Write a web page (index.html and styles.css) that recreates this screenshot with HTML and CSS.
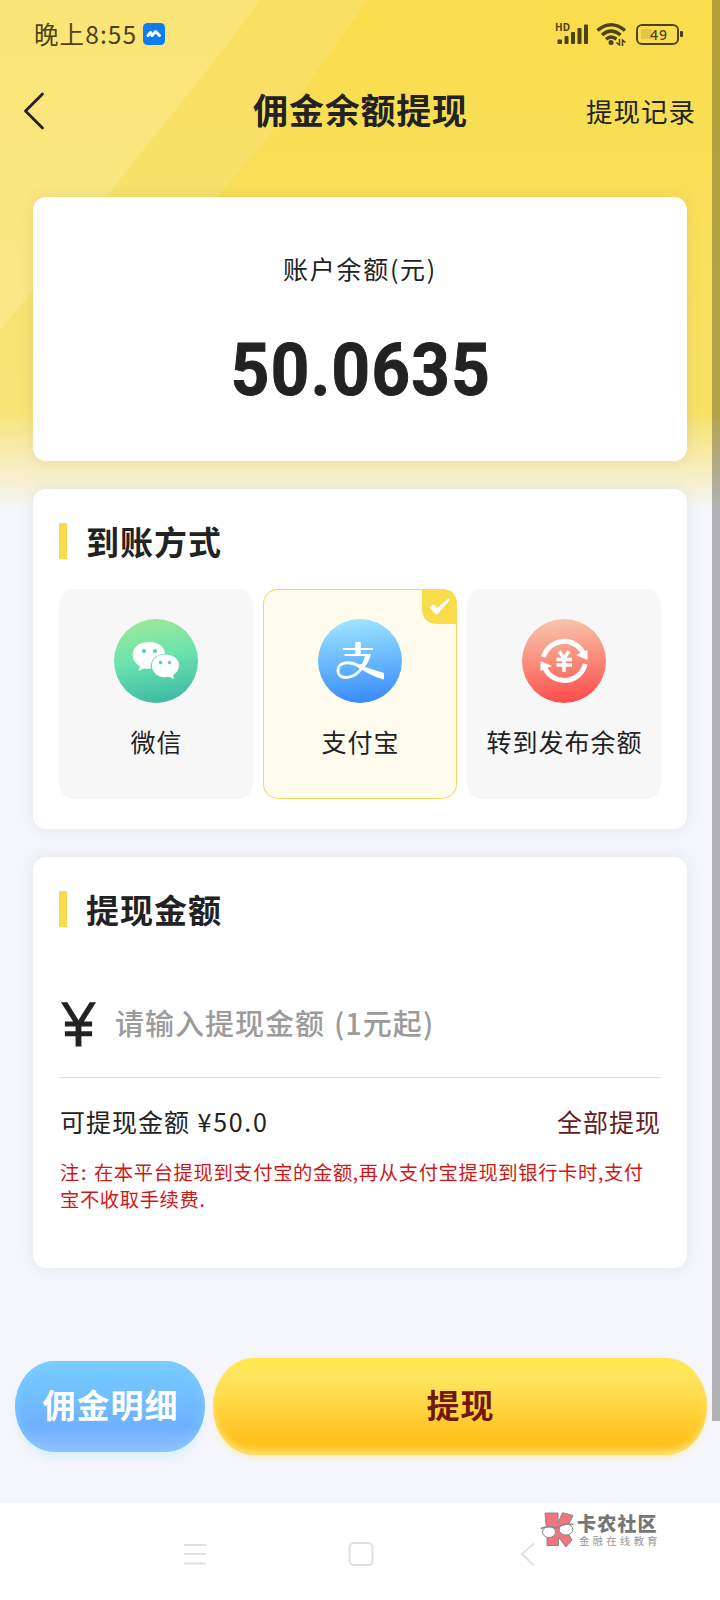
FILE: index.html
```html
<!DOCTYPE html>
<html lang="zh-CN">
<head>
<meta charset="utf-8">
<title>佣金余额提现</title>
<link rel="stylesheet" href="styles.css">
</head>
<body>
<div class="screen">
  <svg class="backdrop" width="720" height="520" viewBox="0 0 720 520" aria-hidden="true">
    <defs>
      <linearGradient id="fade" x1="0" y1="0" x2="0" y2="1">
        <stop offset="0" stop-color="#f5f6fb" stop-opacity="0"/>
        <stop offset="0.79" stop-color="#f5f6fb" stop-opacity="0.14"/>
        <stop offset="0.98" stop-color="#f5f6fb" stop-opacity="1"/>
        <stop offset="1" stop-color="#f5f6fb"/>
      </linearGradient>
    </defs>
    <path d="M0 0H720V520H0Z" fill="#f9dd4c"/>
    <path d="M0 0H368C310 80 270 140 218 195C150 290 70 420 0 510Z" fill="#f9e060"/>
    <path d="M0 0H260C210 70 150 140 108 195C70 245 35 290 0 330Z" fill="#fbe577"/>
    <path d="M0 0H720V520H0Z" fill="url(#fade)"/>
  </svg>

  <header class="status">
    <span class="clock">晚上8:55</span>
    <svg class="app-badge" width="22" height="22" viewBox="0 0 22 22">
      <rect width="22" height="22" rx="4.500" fill="#0d7df2"/>
      <path d="M5 12.500L7.500 9.500M9 12.500L12.500 8.500L16.500 12.500" fill="none" stroke="#fff" stroke-width="3" stroke-linecap="round" stroke-linejoin="round"/>
    </svg>
    <div class="indicators">
      <div class="signal">
        <span class="hd">HD</span>
        <svg width="34" height="24" viewBox="0 0 34 24">
          <g fill="#4c4216"><rect x="2.500" y="17.500" width="4.500" height="4.500" rx="1"/><rect x="9.500" y="14" width="4" height="8" rx="1"/><rect x="16" y="10" width="4" height="12" rx="1"/><rect x="22.500" y="6" width="4" height="16" rx="1"/><rect x="29" y="2.500" width="4" height="19.500" rx="1"/></g>
        </svg>
      </div>
      <svg class="wifi" width="31" height="24" viewBox="0 0 31 24">
        <g fill="none" stroke="#4c4216" stroke-width="3.400"><path d="M1.500 8.500Q15 -3 29 8.500"/><path d="M6 13Q15 5 24.500 13"/><path d="M10 17.200Q15 13 20.500 17.200"/></g>
        <circle cx="15" cy="20.500" r="2.500" fill="#4c4216"/>
        <path d="M20.500 20.500L23.500 23V17M26.500 24V18L29.500 20.500" fill="none" stroke="#4c4216" stroke-width="1.500"/>
      </svg>
      <div class="battery"><span>49</span></div>
    </div>
  </header>

  <nav class="titlebar">
    <svg class="back" width="24" height="40" viewBox="0 0 24 40"><path d="M20.500 3L3.500 20L20.500 37" fill="none" stroke="#222" stroke-width="2.800" stroke-linecap="round" stroke-linejoin="round"/></svg>
    <h1>佣金余额提现</h1>
    <a class="history">提现记录</a>
  </nav>

  <main class="content">
    <section class="card balance">
      <div class="label">账户余额(元)</div>
      <div class="amount">50.0635</div>
    </section>

    <section class="card ways">
      <h2>到账方式</h2>
      <div class="options">
        <div class="option">
          <svg width="84" height="84" viewBox="0 0 84 84">
            <defs><linearGradient id="g1" x1=".4" y1="0" x2=".6" y2="1"><stop offset="0" stop-color="#9be89b"/><stop offset=".45" stop-color="#6de3ae"/><stop offset="1" stop-color="#3ebaa5"/></linearGradient></defs>
            <circle cx="42" cy="42" r="42" fill="url(#g1)"/>
            <path d="M24.500 52L26 47.500C14 40 17 23 35 23C45.500 23 51 29 51 34.700C42 35 35.500 41 37 49.500Q33 50.300 30 49.200Z" fill="#fff"/>
            <path d="M51 35.500C68 36 68 51.500 59 56L60 60L55 57.800C44 60 38 53 38 47C38 40 43.500 35.500 51 35.500Z" fill="#fff"/>
            <g fill="#57cfa9"><circle cx="30" cy="32" r="2.100"/><circle cx="41" cy="32" r="2.100"/><circle cx="46.500" cy="43.500" r="1.700"/><circle cx="55.500" cy="43.500" r="1.700"/></g>
          </svg>
          <span>微信</span>
        </div>
        <div class="option selected">
          <svg width="84" height="84" viewBox="0 0 84 84">
            <defs><linearGradient id="g2" x1=".45" y1="0" x2=".55" y2="1"><stop offset="0" stop-color="#9ee4ff"/><stop offset=".5" stop-color="#68b8ff"/><stop offset="1" stop-color="#388bfb"/></linearGradient></defs>
            <circle cx="42" cy="42" r="42" fill="url(#g2)"/>
            <g fill="none" stroke="#fff"><path d="M25 30H55M26.500 36H52" stroke-width="1.900"/><path d="M40 23V36" stroke-width="5.500"/><path d="M50 36C47 47 39 58.500 28 58.500C22 58.500 19.500 55 20 51C21 42.500 32 42 41 47" stroke-width="2.800"/></g>
            <path d="M47.500 35.500H53C51.500 40.500 49.500 44.500 47 48L66 54V60.500C56 58 47 53 37 46.500L44 45Q46 41 47.500 35.500Z" fill="#fff"/>
          </svg>
          <span>支付宝</span>
          <svg class="tick" width="35" height="35" viewBox="0 0 35 35"><path d="M0 0H19Q35 0 35 16V35H16Q0 35 0 19Z" fill="#f9dc4c"/><path d="M7.500 18L12 15.500L15 19L26.500 9.500L28 10.500L15.500 25.500H13.500Z" fill="#fff"/></svg>
        </div>
        <div class="option">
          <svg width="84" height="84" viewBox="0 0 84 84">
            <defs><linearGradient id="g3" x1=".45" y1="0" x2=".55" y2="1"><stop offset="0" stop-color="#f6c5ae"/><stop offset=".5" stop-color="#fa8b79"/><stop offset="1" stop-color="#fd4b4d"/></linearGradient></defs>
            <circle cx="42" cy="42" r="42" fill="url(#g3)"/>
            <g fill="none" stroke="#fff" stroke-width="5"><path d="M21.500 38A21.500 21.500 0 0 1 62 35.500"/><path d="M63.200 45A21.500 21.500 0 0 1 22 47"/></g>
            <path d="M54 36L65.500 41V31ZM30 47L18.500 42V52Z" fill="#fff"/>
            <path d="M37 32L42 39.500L47 32M34.500 40.500H50M34.500 46H50M42 39V53" fill="none" stroke="#fff" stroke-width="3.500"/>
          </svg>
          <span>转到发布余额</span>
        </div>
      </div>
    </section>

    <section class="card withdraw">
      <h2>提现金额</h2>
      <div class="entry">
        <svg class="yen" width="35" height="45" viewBox="0 0 36 46"><path d="M0 0H6.500L18 18.500L29.500 0H36L23.500 20H32V25H21V30H32V35H21V45.500H15V35H4V30H15V25H4V20H12.500Z" fill="#222"/></svg>
        <span class="hint">请输入提现金额<i class="open">(</i>1元起<i class="close">)</i></span>
      </div>
      <div class="available"><span>可提现金额 <b>¥50.0</b></span><a>全部提现</a></div>
      <p class="note">注<i>:</i> 在本平台提现到支付宝的金额,再从支付宝提现到银行卡时,支付<br>宝不收取手续费.</p>
    </section>
  </main>

  <div class="actions">
    <div class="btn detail">佣金明细</div>
    <div class="btn submit">提现</div>
  </div>

  <footer class="sysnav">
    <svg class="keys" width="720" height="97" viewBox="0 0 720 97" fill="none" stroke="#e0e0e0" stroke-width="2">
      <path d="M184 42H206M184 51H206M184 60.500H206"/>
      <rect x="349.500" y="40" width="23" height="22" rx="4.500"/>
      <path d="M534 40.500L522 51L534 62.500"/>
    </svg>
    <div class="mark">
      <svg width="34" height="36" viewBox="0 0 34 36">
        <path d="M5 1H18V11L22.500 .7L33 3.500L26 18L32 28L26 35L18.500 25V33.500H7V24Z" fill="#ef7580" stroke="#888" stroke-width="1"/>
        <g fill="#fff" stroke="#888" stroke-width="1"><ellipse cx="9" cy="20" rx="6.500" ry="5.500"/><ellipse cx="26" cy="17.500" rx="6.800" ry="5.500"/></g>
        <path d="M.7 16.500Q8 13.500 16 16Q25 10.500 33.500 12.500" fill="none" stroke="#888" stroke-width="1.500"/>
      </svg>
      <div class="mark-text"><strong>卡农社区</strong><small>金融在线教育</small></div>
    </div>
  </footer>
  <div class="scrollbar"></div>
</div>
</body>
</html>
```
FILE: styles.css
```css
* { box-sizing: border-box; }
body {
  margin: 0;
  font-family: "Noto Sans CJK SC", "Noto Sans", sans-serif;
  color: #222;
}
i { font-style: normal; }
.screen {
  position: relative;
  width: 720px;
  height: 1600px;
  overflow: hidden;
  background: #f5f6fb;
  display: flex;
  flex-direction: column;
}
.backdrop { position: absolute; top: 0; left: 0; }
.status {
  position: relative;
  height: 68px;
  padding: 0 41px 0 34px;
  display: flex;
  align-items: center;
  color: #4c4216;
}
.clock { font-size: 24.500px; line-height: 36px; letter-spacing: 1.1px; }
.app-badge { margin-left: 6px; }
.indicators { margin-left: auto; display: flex; align-items: center; }
.signal { position: relative; height: 24px; }
.hd {
  position: absolute;
  left: 0;
  top: -1px;
  font: 700 10px/12px "Noto Sans", sans-serif;
}
.wifi { margin-left: 7px; }
.battery {
  position: relative;
  margin-left: 9px;
  width: 43px;
  height: 21px;
  border: 2.500px solid #4c4216;
  border-radius: 6px;
  background: linear-gradient(90deg, #e0c846 35%, transparent 35%) 3px 3px / 31px 10px no-repeat;
  font: 500 14px/17px "Noto Sans", sans-serif;
  letter-spacing: 1px;
  padding-left: 3px;
  text-align: center;
}
.battery::after {
  content: "";
  position: absolute;
  right: -6px;
  top: 5px;
  width: 3px;
  height: 6px;
  border-radius: 1px;
  background: #4c4216;
}
.titlebar {
  position: relative;
  height: 88px;
  padding: 0 25px 2px 22px;
  display: grid;
  grid-template-columns: 180px 1fr 180px;
  align-items: center;
}
.titlebar h1 {
  margin: 0;
  padding: 0 0 4px 4px;
  font-size: 35px;
  line-height: 50px;
  letter-spacing: 0.8px;
  text-align: center;
  white-space: nowrap;
}
.history { font-size: 26.500px; letter-spacing: 1px; margin-right: -1px; padding-bottom: 1px; text-align: right; }
.content {
  position: relative;
  padding: 41px 33px 0;
  display: flex;
  flex-direction: column;
  gap: 28px;
}
.card {
  background: #fff;
  border-radius: 13px;
  box-shadow: 0 0 14px rgba(80, 90, 120, 0.11);
  padding: 0 26px;
}
.balance { height: 264px; text-align: center; padding-top: 52px; }
.label { font-size: 25px; line-height: 38px; letter-spacing: 1.700px; }
.amount {
  margin: 39px 0 0 2px;
  font: 700 73px/88px Roboto, sans-serif;
  letter-spacing: 1.500px;
  -webkit-text-stroke: 1px #222;
  transform: scaleX(0.92);
}
.ways { height: 340px; padding-top: 28px; }
h2 {
  margin: 0;
  display: flex;
  align-items: center;
  gap: 19px;
  font-size: 33px;
  line-height: 48px;
  letter-spacing: 1px;
}
h2::before { content: ""; width: 8px; height: 36px; background: #f9dc4c; }
.options { margin-top: 24px; display: grid; grid-template-columns: repeat(3, 194px); gap: 10px; }
.option {
  position: relative;
  height: 210px;
  padding-top: 30px;
  border-radius: 15px;
  background: #f7f7f7;
  display: flex;
  flex-direction: column;
  align-items: center;
  gap: 19px;
  font-size: 25px;
  line-height: 38px;
  letter-spacing: 1px;
  white-space: nowrap;
}
.option span { padding-left: 1px; }
.selected { background: #fffcee; box-shadow: inset 0 0 0 1px #ecd966; }
.tick { position: absolute; right: 0; top: 0; }
.withdraw { height: 411px; padding-top: 28px; }
.entry {
  height: 145px;
  padding: 38px 0 0 2px;
  display: flex;
  align-items: center;
  gap: 19px;
  border-bottom: 1px solid #ddd;
}
.hint {
  margin-top: -5px;
  font-size: 29px;
  line-height: 44px;
  letter-spacing: 1px;
  font-weight: 500;
  color: #9b9b9b;
}
.hint .open { margin-left: 9px; }
.available {
  margin: 24px 1px 0;
  display: flex;
  justify-content: space-between;
  font-size: 25px;
  line-height: 38px;
  letter-spacing: 1px;
}
.available b { font-weight: 400; margin-left: 1px; letter-spacing: 1.700px; }
.available a { margin-right: -1px; color: #641b22; }
.note {
  margin: 19px 0 0 1px;
  font-size: 19.300px;
  line-height: 27px;
  letter-spacing: 0.640px;
  color: #d01717;
  white-space: nowrap;
}
.note i { margin: 0 2px 0 1px; }
.actions {
  position: relative;
  margin-top: 90px;
  padding: 0 13px 0 15px;
  display: flex;
  align-items: center;
  gap: 8px;
}
.btn {
  padding: 0 0 5px 1px;
  display: flex;
  align-items: center;
  justify-content: center;
  font-size: 33px;
  letter-spacing: 1px;
  font-weight: 700;
}
.detail {
  width: 190px;
  height: 91px;
  border-radius: 40px / 46px;
  color: #fff;
  background: linear-gradient(#77ceff, #6eb0ff 72%, #94bfff);
  box-shadow: inset 0 0 14px rgba(130, 203, 255, 0.8), 0 8px 8px -2px rgba(205, 238, 255, 0.7);
}
.submit {
  flex: 1;
  height: 97px;
  border-radius: 41px / 48px;
  color: #731711;
  background: linear-gradient(#ffe94c, #ffe55f 20%, #ffc11b 86%, #ffc935);
  box-shadow: inset 0 -4px 7px rgba(255, 227, 120, 0.9), 0 3px 5px rgba(255, 237, 175, 0.7);
}
.sysnav { position: absolute; left: 0; top: 1503px; width: 720px; height: 97px; background: #fff; }
.keys { display: block; }
.mark { position: absolute; left: 540px; top: 9px; display: flex; gap: 3px; color: #777; }
.mark-text { display: flex; flex-direction: column; white-space: nowrap; }
.mark-text strong { font-size: 19px; line-height: 22px; letter-spacing: 1.200px; font-weight: 900; }
.mark-text small { margin-left: 2px; font-size: 10.500px; line-height: 14px; letter-spacing: 3.100px; color: #999; }
.scrollbar { position: absolute; right: 0; top: 0; width: 8px; height: 1421px; background: rgba(0, 0, 0, 0.28); }
```
